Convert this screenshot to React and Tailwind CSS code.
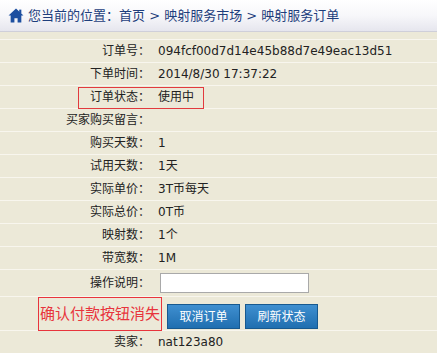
import React from "react";

const rows = [
  ["订单号：", "094fcf00d7d14e45b88d7e49eac13d51"],
  ["下单时间：", "2014/8/30 17:37:22"],
  ["订单状态：", "使用中"],
  ["买家购买留言：", ""],
  ["购买天数：", "1"],
  ["试用天数：", "1天"],
  ["实际单价：", "3T币每天"],
  ["实际总价：", "0T币"],
  ["映射数：", "1个"],
  ["带宽数：", "1M"],
];

function Row({ label, children, h = "h-[23px]", extra = null }) {
  return (
    <div className={`relative flex items-center ${h} border-t border-[#f8f6ee]`}>
      <div className="w-[150px] text-right shrink-0">{label}</div>
      <div className="pl-2 flex items-center">{children}</div>
      {extra}
    </div>
  );
}

export default function App() {
  return (
    <div
      className="w-[437px] h-[353px] overflow-hidden bg-[#ece9d8] text-[12px] text-[#222]"
      style={{ fontFamily: '"DejaVu Sans", "Noto Sans CJK SC", sans-serif' }}
    >
      <div className="h-[32px] flex items-center pl-[8px] bg-gradient-to-b from-[#ffffff] via-[#f7f7fa] to-[#e6e6ee] border-b border-[#cfcfd9]">
        <svg width="16" height="15" viewBox="0 0 15 14" className="shrink-0">
          <path d="M7.5 0.5 L0.5 7 L2.5 7 L2.5 13.5 L6 13.5 L6 9.5 L9 9.5 L9 13.5 L12.5 13.5 L12.5 7 L14.5 7 Z" fill="#1d4fa0" />
          <rect x="10.5" y="1.5" width="2" height="3.5" fill="#1d4fa0" />
        </svg>
        <div className="ml-[4px] text-[13px] text-[#1e3e7c] whitespace-nowrap">
          您当前的位置：首页 &gt; 映射服务市场 &gt; 映射服务订单
        </div>
      </div>
      <div className="h-[7px]" />
      {rows.map(([l, v], i) => (
        <Row
          key={i}
          label={l}
          extra={
            i === 2 ? (
              <div className="absolute z-10 left-[78px] top-[1px] w-[126px] h-[22px] border border-[#e23a3e]" />
            ) : null
          }
        >
          {v}
        </Row>
      ))}
      <Row label="操作说明：" h="h-[27px]">
        <input
          className="ml-[2px] w-[149px] h-[20px] bg-white border border-[#a9a9a9] outline-none"
          type="text"
        />
      </Row>
      <Row
        label=""
        h="h-[34px]"
        extra={
          <div className="absolute z-10 left-[38px] top-[0px] w-[124px] h-[34px] border border-[#e8343c] flex items-center justify-center text-[15px] text-[#e8343c] whitespace-nowrap">
            确认付款按钮消失
          </div>
        }
      >
        <div className="flex gap-[5px] ml-[9px] mt-[6px]">
          <button className="w-[73px] h-[25px] text-white text-[12px] bg-gradient-to-b from-[#3f8fd0] to-[#1f6fb0] border border-[#17598f]">
            取消订单
          </button>
          <button className="w-[73px] h-[25px] text-white text-[12px] bg-gradient-to-b from-[#3f8fd0] to-[#1f6fb0] border border-[#17598f]">
            刷新状态
          </button>
        </div>
      </Row>
      <Row label="卖家：">nat123a80</Row>
    </div>
  );
}
